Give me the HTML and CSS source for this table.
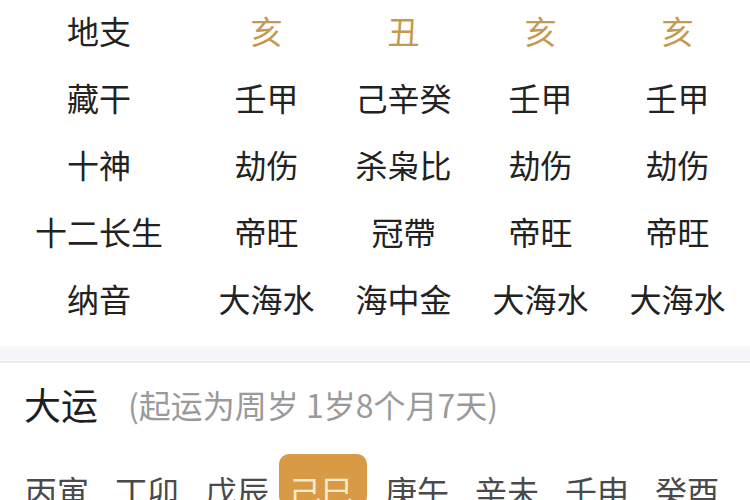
FILE: index.html
```html
<!DOCTYPE html>
<html lang="zh-CN">
<head>
<meta charset="utf-8">
<link rel="stylesheet" href="styles.css">
</head>
<body>
<div class="page">
  <div class="table">
    <div class="cell label">地支</div>
    <div class="cell gold">亥</div>
    <div class="cell gold">丑</div>
    <div class="cell gold">亥</div>
    <div class="cell gold">亥</div>

    <div class="cell label">藏干</div>
    <div class="cell">壬甲</div>
    <div class="cell">己辛癸</div>
    <div class="cell">壬甲</div>
    <div class="cell">壬甲</div>

    <div class="cell label">十神</div>
    <div class="cell">劫伤</div>
    <div class="cell">杀枭比</div>
    <div class="cell">劫伤</div>
    <div class="cell">劫伤</div>

    <div class="cell label">十二长生</div>
    <div class="cell">帝旺</div>
    <div class="cell">冠帶</div>
    <div class="cell">帝旺</div>
    <div class="cell">帝旺</div>

    <div class="cell label">纳音</div>
    <div class="cell">大海水</div>
    <div class="cell">海中金</div>
    <div class="cell">大海水</div>
    <div class="cell">大海水</div>
  </div>

  <div class="divider"></div>

  <div class="section-head">
    <span class="title">大运</span>
    <span class="note">(起运为周岁 1岁8个月7天)</span>
  </div>

  <div class="dayun">
    <div class="yun">丙寅</div>
    <div class="yun">丁卯</div>
    <div class="yun">戊辰</div>
    <div class="yun active">己巳</div>
    <div class="yun">庚午</div>
    <div class="yun">辛未</div>
    <div class="yun">壬申</div>
    <div class="yun">癸酉</div>
  </div>
</div>
</body>
</html>
```

FILE: styles.css
```css
html, body {
  margin: 0;
  padding: 0;
  background: #ffffff;
}

body {
  font-family: "Noto Sans CJK SC", "Noto Sans", sans-serif;
  color: #222222;
  width: 750px;
  height: 500px;
  overflow: hidden;
}

.page {
  display: flex;
  flex-direction: column;
}

.table {
  display: grid;
  grid-template-columns: 198px repeat(4, 137px);
  grid-auto-rows: 67px;
  margin-top: -4px;
  margin-bottom: 3px;
}

.cell {
  display: flex;
  align-items: center;
  justify-content: center;
  font-size: 32px;
  line-height: 1;
  color: #222222;
  white-space: nowrap;
}

.cell.gold {
  color: #c49a52;
}

.divider {
  margin-top: 12px;
  height: 15px;
  background: #f7f7f9;
  border-bottom: 2px solid #ececf0;
}

.section-head {
  display: flex;
  align-items: center;
  height: 82px;
  padding-left: 24px;
}

.title {
  font-size: 37px;
  color: #1e1e1e;
}

.note {
  font-size: 32px;
  color: #9a9a9a;
  margin-left: 30px;
}

.dayun {
  display: flex;
  gap: 22px;
  padding-left: 25px;
  margin-top: 9px;
}

.yun {
  font-size: 32px;
  line-height: 1;
  color: #4a4a4a;
  padding-top: 20px;
  width: 68px;
  white-space: nowrap;
}

.yun.active {
  background: #d99a45;
  color: #fcebcc;
  border-radius: 10px;
  width: 68px;
  padding: 20px 10px 0 10px;
  margin-left: -16px;
  margin-right: -4px;
}
```
